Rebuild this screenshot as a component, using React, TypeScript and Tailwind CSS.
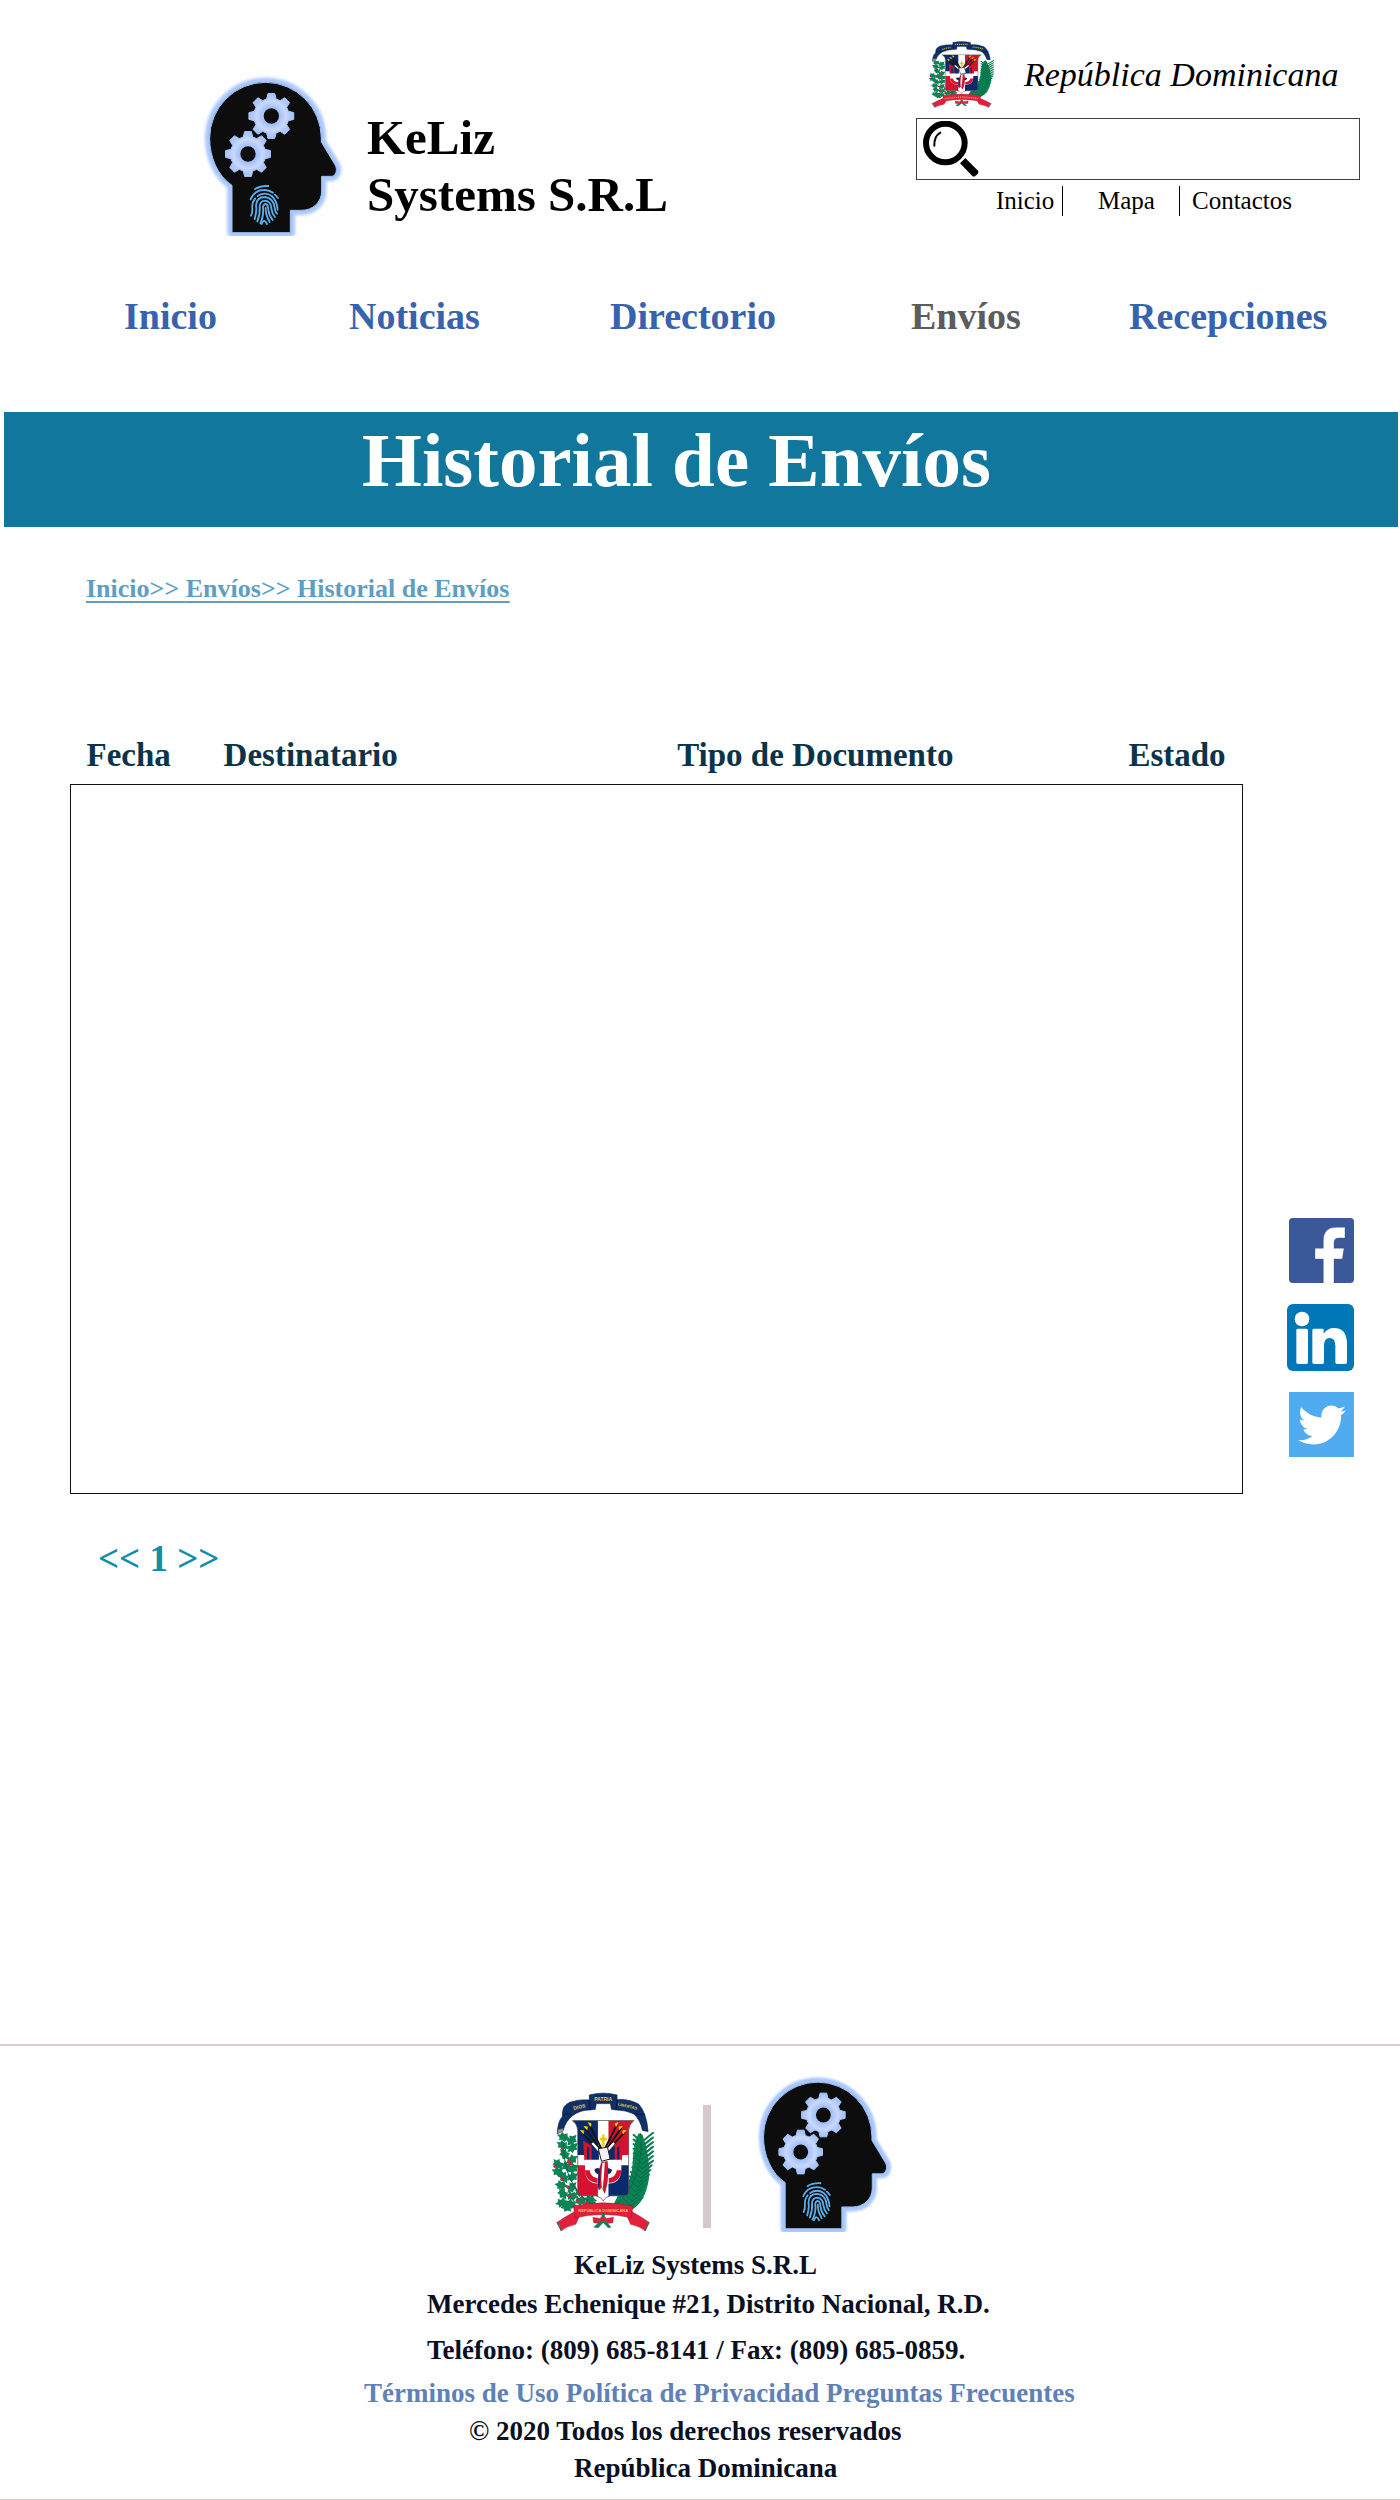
import React from "react";
import { FaTwitter } from "react-icons/fa";

function gearPath(cx: number, cy: number) {
  const outer = 68;
  const inner = 53;
  const pts: string[] = [];
  for (let i = 0; i < 8; i++) {
    const a = (i * Math.PI) / 4 - Math.PI / 2;
    const steps: [number, number][] = [
      [-0.27, inner],
      [-0.15, outer],
      [0.15, outer],
      [0.27, inner],
    ];
    for (const [d, r] of steps) {
      pts.push(`${(cx + r * Math.cos(a + d)).toFixed(1)} ${(cy + r * Math.sin(a + d)).toFixed(1)}`);
    }
  }
  return `M${pts.join("L")}Z`;
}

const HEAD =
  "M127 515V373C84 345 60 288 60 232A168 168 0 0 1 228 64A168 168 0 0 1 395 232V243L436 311C445 326 438 346 426 346H396V390C396 424 370 448 335 448H302V515Z";

const PRINT = [
  "M196 384Q212 374 236 375",
  "M183 415Q194 388 222 387Q238 386 250 395",
  "M256 401L265 411",
  "M204 405Q226 391 246 405Q262 419 264 446",
  "M197 412Q186 425 188 442Q189 454 184 464",
  "M195 474Q202 450 199 434Q200 408 226 408Q252 411 255 440Q256 452 262 458",
  "M203 481Q212 458 210 436Q211 419 227 419Q243 421 245 442Q247 458 256 468",
  "M212 487Q223 463 220 438Q222 429 228 429Q235 431 236 446Q238 464 249 477",
  "M228 441Q227 460 240 483",
  "M216 489Q223 470 232 489",
];

function HeadLogo({ className, id }: { className: string; id: string }) {
  return (
    <svg viewBox="40 42 420 483" className={className} role="img" aria-label="KeLiz Systems" preserveAspectRatio="none">
      <defs>
        <filter id={`${id}-glow`} x="-20%" y="-20%" width="140%" height="140%">
          <feGaussianBlur stdDeviation="4" />
        </filter>
        <radialGradient id={`${id}-gear`}>
          <stop offset="0.4" stopColor="#a6c3fb" />
          <stop offset="0.65" stopColor="#c9d8fb" />
          <stop offset="0.9" stopColor="#a9c5fb" />
        </radialGradient>
      </defs>
      <path d={HEAD} fill="#a9c6fd" stroke="#a9c6fd" strokeWidth="28" strokeLinejoin="round" filter={`url(#${id}-glow)`} />
      <path d={HEAD} fill="#0d0d0d" stroke="#9cc4f5" strokeWidth="3" />
      {[[245, 165], [175, 279]].map(([x, y]) => (
        <g key={x}>
          <path d={gearPath(x, y)} fill={`url(#${id}-gear)`} stroke="#a6c8fb" strokeWidth="3" strokeLinejoin="round" />
          <circle cx={x} cy={y} r="23" fill="#0d0d0d" />
        </g>
      ))}
      <g fill="none" stroke="#5baeea" strokeWidth="5.5" strokeLinecap="round">
        {PRINT.map((d) => (
          <path key={d} d={d} />
        ))}
      </g>
    </svg>
  );
}

const LEAVES: [number, number, number][] = [
  [125, 320, 20], [150, 330, -50], [122, 345, 30], [152, 352, -40], [128, 372, 50], [150, 388, -30],
  [108, 402, 50], [134, 408, 20], [153, 415, -30], [108, 425, 20], [125, 440, 60], [152, 440, -30],
  [118, 465, 10], [150, 472, -50], [122, 490, 60], [150, 498, 10], [175, 485, -30], [120, 518, -10],
  [148, 522, 30], [178, 512, -20], [205, 508, 10], [132, 530, 40], [205, 525, -30],
];
const BERRIES: [number, number][] = [
  [122, 354], [141, 394], [148, 400], [120, 447], [143, 498], [138, 470], [167, 510], [195, 516], [99, 408],
];

function CoatOfArms({ className, id, lettered = false }: { className: string; id: string; lettered?: boolean }) {
  return (
    <svg viewBox="90 184 318 422" className={className} role="img" aria-label="Escudo de la República Dominicana" preserveAspectRatio="none">
      <defs>
        <clipPath id={`${id}-shield`}>
          <path d="M152 270H338Q322 283 322 300V484Q322 497 305 497H268Q250 501 245 513Q240 501 222 497H185Q168 497 168 484V300Q168 283 152 270Z" />
        </clipPath>
      </defs>

      <g fill="#0a8355">
        {LEAVES.map(([x, y, r]) => (
          <path
            key={`${x}-${y}`}
            transform={`translate(${x} ${y}) rotate(${r})`}
            d="M-21 0L-11 -5L-10 -14L-1 -9L7 -15L11 -6L22 0L11 5L7 14L-1 9L-10 13L-11 5Z"
          />
        ))}
      </g>
      <path d="M124 335Q125 470 215 525" fill="none" stroke="#07603f" strokeWidth="3" />
      <g fill="#d5213c">
        {BERRIES.map(([x, y]) => (
          <circle key={`${x}-${y}`} cx={x} cy={y} r="5" />
        ))}
      </g>

      <path d="M352 308Q336 340 334 400Q330 460 290 496L275 525L330 540Q375 515 384 440Q388 380 364 312Z" fill="#0a8355" />
      <g stroke="#0a8355" strokeWidth="6" strokeLinecap="round">
        {Array.from({ length: 15 }, (_, i) => {
          const y = 335 + i * 14;
          const x = 362 - Math.max(0, i - 6) * 4;
          return <path key={i} d={`M${x} ${y}L${x + 34} ${y - 28}M${x} ${y}L${x - 25} ${y - 22}`} />;
        })}
      </g>
      <g stroke="#075c3c" strokeWidth="2" strokeLinecap="round" fill="none">
        <path d="M358 308Q372 450 278 530" />
        {Array.from({ length: 14 }, (_, i) => {
          const y = 345 + i * 14;
          const x = 364 - Math.max(0, i - 6) * 5;
          return <path key={i} d={`M${x} ${y}L${x + 26} ${y - 22}M${x} ${y}L${x - 22} ${y - 20}`} />;
        })}
      </g>

      <g clipPath={`url(#${id}-shield)`}>
        <path d="M150 268H340V515H150Z" fill="#fff" />
        <path d="M150 268H229V374H150ZM261 405H340V515H261Z" fill="#0b2a6b" />
        <path d="M261 268H340V374H261ZM150 405H229V515H150Z" fill="#d5122f" />
        <path d="M184 330L232 360V395H190V345ZM306 330L258 360V395H300V345Z" fill="#0b2a6b" />
        <path d="M184 330L210 346V392H203V352L196 347V390H188ZM306 330L280 346V392H287V352L294 347V390H302Z" fill="#d5122f" />
        <path d="M190 388H300V415Q300 458 262 460L245 470L228 460Q190 458 190 415Z" fill="#fff" />
        <path d="M190 420Q192 455 228 458V444Q206 440 204 420ZM300 420Q298 455 262 458V444Q284 440 286 420Z" fill="#d5122f" />
        <path d="M218 418Q228 408 240 420Q255 408 272 418Q268 434 255 430Q245 436 235 430Q222 434 218 418Z" fill="#0b2a6b" />
      </g>
      <path
        d="M152 270H338Q322 283 322 300V484Q322 497 305 497H268Q250 501 245 513Q240 501 222 497H185Q168 497 168 484V300Q168 283 152 270Z"
        fill="none"
        stroke="#3b3b3b"
        strokeWidth="2"
      />
      <path d="M180 305L240 370M190 292L240 365M203 282L243 362M310 305L250 370M300 292L250 365M287 282L247 362" stroke="#151515" strokeWidth="6" />
      <path d="M212 338L232 360M278 338L258 360" stroke="#fff" strokeWidth="7" />
      <path d="M176 300l10 1l-1 9zM187 288l10 1l-1 9zM200 276l9 4l-3 8zM314 300l-10 1l1 9zM303 288l-10 1l1 9zM290 276l-9 4l3 8z" fill="#ffd400" stroke="#ffd400" strokeWidth="2" />
      <path d="M242 312H249V322H256V330H249V348H242V330H235V322H242Z" fill="#f7c500" />
      <path d="M230 355L258 350L266 386L240 393Z" fill="#f4f4f4" stroke="#1d1d1d" strokeWidth="3" />
      <path d="M240 396L258 393Q265 440 250 490L240 470Q230 490 230 465Q228 425 240 396Z" fill="#d5122f" stroke="#333" strokeWidth="1" />
      <path d="M243 398L250 396Q248 440 243 482Q236 450 243 398Z" fill="#fff" />
      <path d="M236 412Q226 440 231 478Q238 460 236 412Z" fill="#0b2a6b" />

      <path
        d="M203 193Q245 182 287 193V207Q320 204 352 220Q376 245 381 303L364 300Q358 268 338 250Q312 238 284 238L270 236L267 219H224L221 236L206 238Q176 238 154 254Q130 272 124 300L106 310Q108 270 122 258Q118 226 144 215Q172 205 203 208Z"
        fill="#0f3069"
        stroke="#0a1e42"
        strokeWidth="2"
      />
      <path d="M122 258Q132 245 150 252M203 208L206 238M287 207L284 238M338 250L372 252" fill="none" stroke="#071631" strokeWidth="3" />
      <path d="M106 310L109 297L124 294L123 302Z" fill="#999" stroke="#444" />

      <g fill="#e3203c" stroke="#8d1527" strokeWidth="1.5">
        <path d="M158 545Q130 560 105 577L118 602Q135 588 162 583L172 560Z" />
        <path d="M332 545Q360 560 384 577L372 602Q355 588 328 583L318 560Z" />
        <path d="M214 562L240 566L232 580L216 578ZM276 562L250 566L258 580L274 578Z" />
        <path d="M155 528Q245 508 335 528L330 563Q245 543 160 563Z" />
      </g>
      <path d="M105 577L118 602L114 586ZM384 577L372 602L376 586Z" fill="#aaa" stroke="#555" strokeWidth="3" />
      <path d="M240 552H250V570L270 592L260 594L245 578L230 594L215 592L240 570Z" fill="#0a8355" />
      <path d="M237 560H253V574H237Z" fill="#e3203c" />

      {lettered ? (
        <g fontFamily="Liberation Sans" fill="#e8cf3f" textAnchor="middle">
          <text fontSize="15" transform="translate(174 234) rotate(-14)">DIOS</text>
          <text fontSize="15" x="245" y="210">PATRIA</text>
          <text fontSize="12" transform="translate(318 231) rotate(13)">LIBERTAD</text>
          <text fontSize="12" x="245" y="545">REPÚBLICA DOMINICANA</text>
        </g>
      ) : (
        <g fill="none" stroke="#d9b93a" strokeWidth="8" strokeDasharray="5 4">
          <path d="M154 237Q170 227 192 226M214 205H276M297 222Q322 223 348 236" />
          <path d="M165 548Q245 528 326 548" />
        </g>
      )}
    </svg>
  );
}

function SearchIcon() {
  return (
    <svg viewBox="70 303 168 168" className="size-14 shrink-0" aria-hidden="true">
      <circle cx="137" cy="369" r="58" fill="none" stroke="#000" strokeWidth="18" />
      <path d="M104 377Q103 349 122 338" fill="none" stroke="#000" strokeWidth="6" strokeLinecap="round" />
      <path d="M181 430L197 414L235 452Q240 460 226 469Q222 471 218 468Z" fill="#000" />
    </svg>
  );
}

const NAV = [
  { label: "Inicio", active: false },
  { label: "Noticias", active: false },
  { label: "Directorio", active: false },
  { label: "Envíos", active: true },
  { label: "Recepciones", active: false },
];

export default function App() {
  return (
    <div className="bg-[#fefefe] text-black font-['Palatino_Linotype','Liberation_Serif',serif]">
      <header>
        <div className="flex items-start">
          <a href="#" className="ml-[203px] mt-[75px] flex text-[49px] leading-[57px] font-bold">
            <HeadLogo id="top" className="h-[161px] w-[140px] shrink-0" />
            <span className="ml-6 mt-[34px]">
              KeLiz
              <br />
              Systems S.R.L
            </span>
          </a>
          <div className="ml-auto mr-10 mt-[41px] w-[444px]">
            <div className="flex items-center pl-[13px]">
              <CoatOfArms id="arms-top" className="h-[67px] w-[67px]" />
              <p className="ml-7 text-[34px] leading-10 italic">República Dominicana</p>
            </div>
            <form role="search" className="mt-2.5 flex h-[62px] items-center border border-neutral-700 pl-1.5">
              <label htmlFor="q" aria-label="Buscar">
                <SearchIcon />
              </label>
              <input id="q" type="search" className="ml-2 h-full min-w-0 flex-1 bg-transparent text-2xl outline-none" />
            </form>
            <nav aria-label="Secundaria" className="mt-1.5 flex pl-20 text-[25px] leading-[30px]">
              <a href="#" className="w-[67px] border-r border-black">Inicio</a>
              <a href="#" className="w-[117px] border-r border-black pl-[35px]">Mapa</a>
              <a href="#" className="pl-3">Contactos</a>
            </nav>
          </div>
        </div>
        <nav
          aria-label="Principal"
          className="mt-[60px] grid grid-cols-[225fr_261fr_301fr_218fr_201fr] pr-[70px] pl-[124px] text-[38px] leading-10 font-bold"
        >
          {NAV.map((n) => (
            <a
              key={n.label}
              href="#"
              aria-current={n.active ? "page" : undefined}
              className={n.active ? "text-[#5c5c5c]" : "text-[#3763ae]"}
            >
              {n.label}
            </a>
          ))}
        </nav>
      </header>

      <main>
        <h1 className="mt-[76px] mr-0.5 ml-1 bg-[#12779d] pt-2 pb-[27px] pl-[358px] text-[77px] leading-20 font-bold text-white">
          Historial de Envíos
        </h1>

        <nav aria-label="Ruta" className="mt-[46px] ml-[86px] text-[26px] leading-8 font-bold text-[#5f9ec2]">
          <span className="underline decoration-2 underline-offset-4">
            <a href="#">Inicio</a>&gt;&gt; <a href="#">Envíos</a>&gt;&gt; <a href="#">Historial de Envíos</a>
          </span>
        </nav>

        <section className="mt-[129px] flex pr-[46px] pl-[70px]">
          <table className="flex-1 table-fixed border-collapse">
            <colgroup>
              <col className="w-[11.7%]" />
              <col className="w-[38.7%]" />
              <col className="w-[38.5%]" />
              <col className="w-[11.1%]" />
            </colgroup>
            <thead>
              <tr className="text-left text-[33px] leading-10 text-[#0b344b]">
                <th className="pt-px pb-[9px] pl-4">Fecha</th>
                <th className="pt-px pb-[9px] pl-4">Destinatario</th>
                <th className="pt-px pb-[9px] pl-4">Tipo de Documento</th>
                <th className="pt-px pb-[9px] pl-4">Estado</th>
              </tr>
            </thead>
            <tbody>
              <tr>
                <td colSpan={4} className="h-[709px] border border-[#111]" />
              </tr>
            </tbody>
          </table>
          <div className="mb-[37px] ml-11 flex flex-col items-end gap-[21px] self-end">
            <a href="#" aria-label="Facebook">
              <svg viewBox="87 84 195 195" className="size-[65px]">
                <rect x="87" y="84" width="195" height="195" rx="11" fill="#3b5998" />
                <path
                  d="M190 280V207H165V175H190V152Q190 112 230 112H255V144H236Q222 144 222 158V175H252L247 207H222V280Z"
                  fill="#fff"
                  stroke="#2c4583"
                  strokeWidth="1"
                />
              </svg>
            </a>
            <a href="#" aria-label="LinkedIn">
              <svg viewBox="81 342 201 201" className="size-[67px]">
                <rect x="81" y="342" width="201" height="201" rx="18" fill="#0077b7" />
                <g fill="#fff">
                  <circle cx="126" cy="387" r="22" />
                  <rect x="109" y="416" width="35" height="106" rx="5" />
                  <path d="M162 416H187Q191 416 191 420V431Q202 414 222 414Q261 414 261 462V517Q261 522 256 522H231Q226 522 226 517V467Q226 444 209 444Q192 444 192 467V517Q192 522 187 522H162Q157 522 157 517V421Q157 416 162 416Z" />
                </g>
              </svg>
            </a>
            <a href="#" aria-label="Twitter" className="flex size-[65px] items-center justify-center bg-[#50abf1] text-white">
              <FaTwitter size={48} />
            </a>
          </div>
        </section>

        <nav aria-label="Paginación" className="mt-[45px] ml-[98px] text-[37px] leading-10 font-bold text-[#108da7]">
          <a href="#">&lt;&lt;</a> <a href="#">1</a> <a href="#">&gt;&gt;</a>
        </nav>
      </main>

      <footer className="mt-[465px] border-t-2 border-b border-t-[#d8cbcc] border-b-[#d8cbcc] pt-[29px] pb-[15px] text-[27px] leading-8 font-bold text-[#0a1024]">
        <div className="ml-[39.4%] flex items-end">
          <CoatOfArms id="arms-bottom" lettered className="h-[140px] w-[105px]" />
          <div className="mb-1 ml-[46px] h-[123px] w-2 bg-[#d5c8ca]" />
          <HeadLogo id="bottom" className="ml-[46px] h-[157px] w-[136px]" />
        </div>
        <p className="mt-[17px] ml-[41%]">KeLiz Systems S.R.L</p>
        <address className="not-italic">
          <p className="mt-[7px] ml-[30.5%]">Mercedes Echenique #21, Distrito Nacional, R.D.</p>
          <p className="mt-3.5 ml-[30.5%]">Teléfono: (809) 685-8141 / Fax: (809) 685-0859.</p>
        </address>
        <nav aria-label="Legal" className="mt-[11px] ml-[26%] text-[#5f81b6]">
          <a href="#">Términos de Uso</a> <a href="#">Política de Privacidad</a> <a href="#">Preguntas Frecuentes</a>
        </nav>
        <p className="mt-1.5 ml-[33.5%]">© 2020 Todos los derechos reservados</p>
        <p className="mt-[5px] ml-[41%]">República Dominicana</p>
      </footer>
    </div>
  );
}
